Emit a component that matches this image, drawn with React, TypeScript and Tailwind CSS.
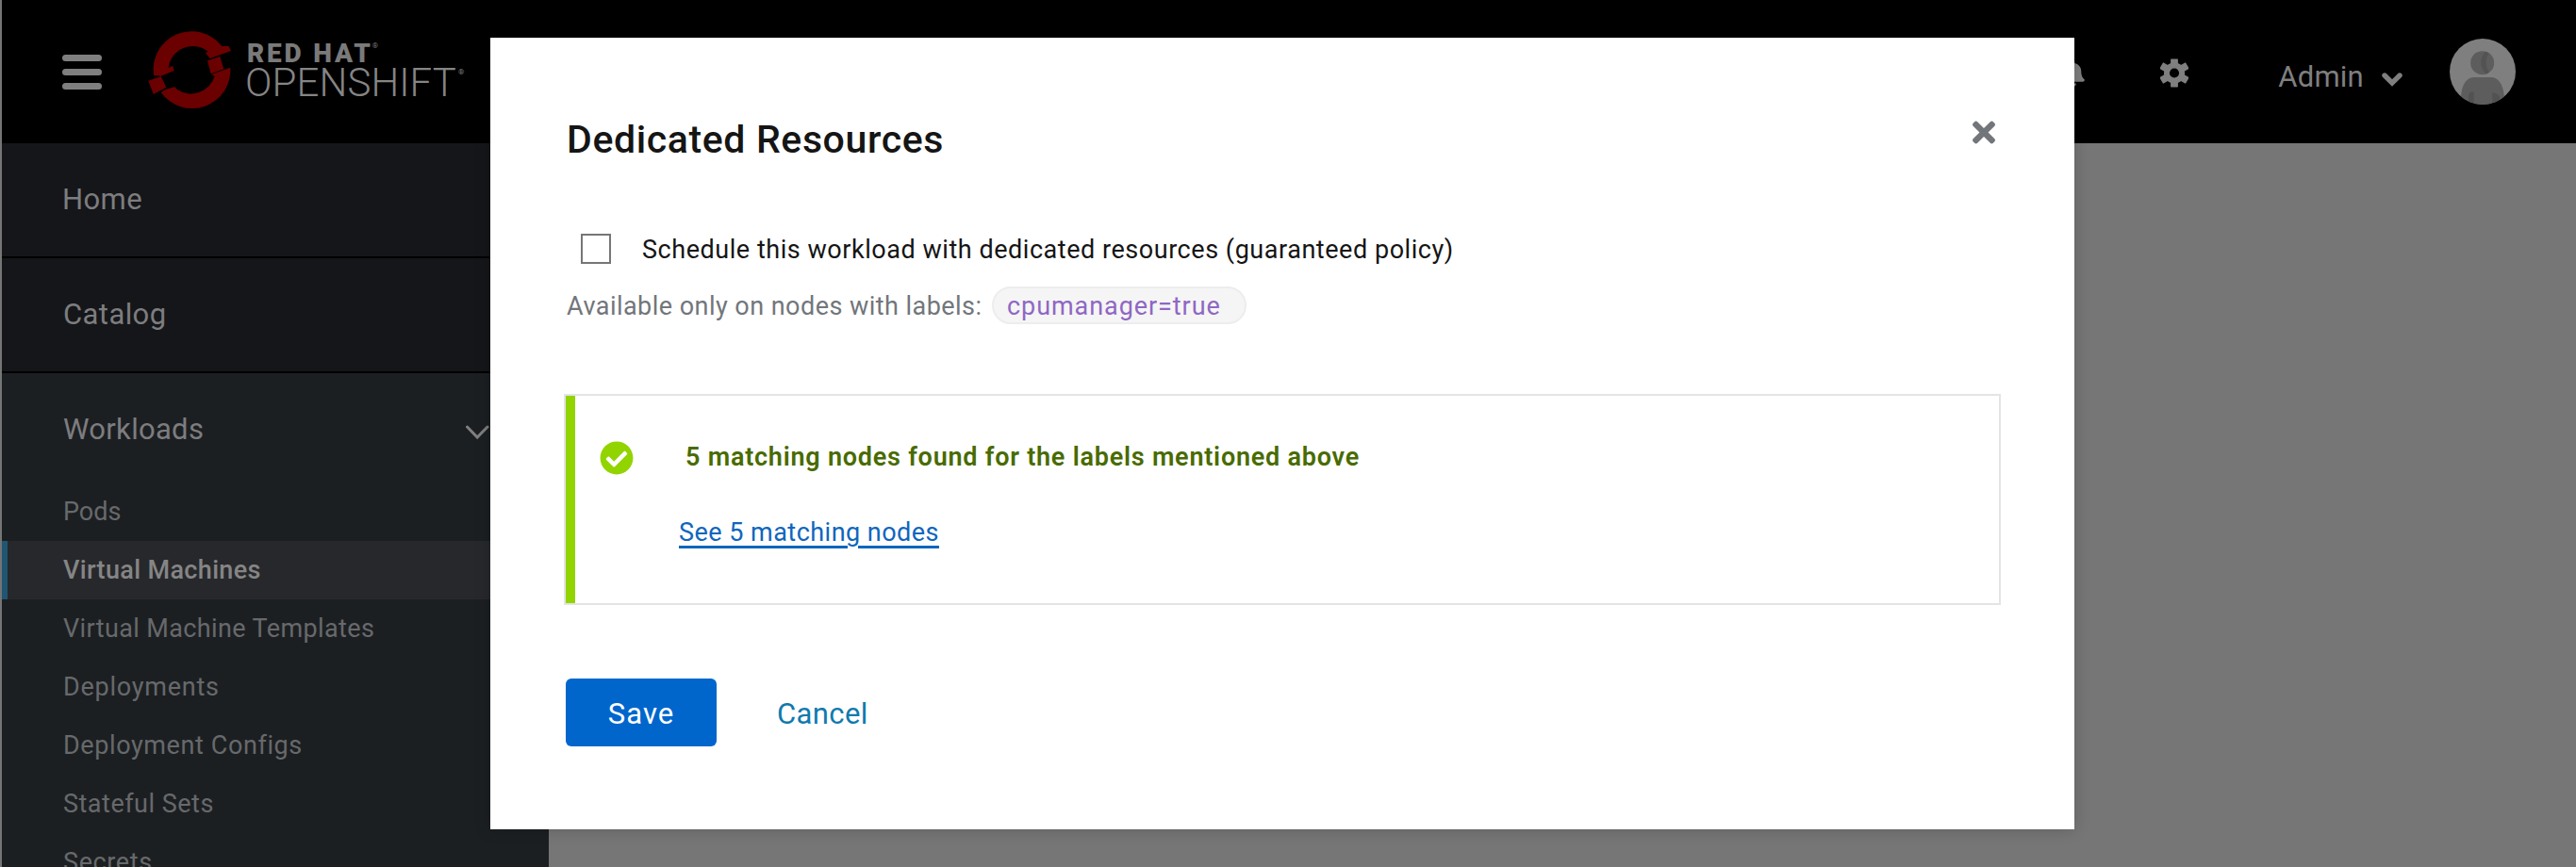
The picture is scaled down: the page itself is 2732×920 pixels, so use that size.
import React from "react";
import { FaBell, FaCheckCircle, FaTimes } from "react-icons/fa";

const subItems = [
  { label: "Pods", spacing: "" },
  { label: "Virtual Machines", spacing: "tracking-[0.35px]", active: true },
  { label: "Virtual Machine Templates", spacing: "tracking-[0.38px]" },
  { label: "Deployments", spacing: "tracking-[0.75px]" },
  { label: "Deployment Configs", spacing: "tracking-[0.6px]" },
  { label: "Stateful Sets", spacing: "tracking-[0.5px]" },
  { label: "Secrets", spacing: "tracking-[0.6px]" },
];

function LogoMark() {
  return (
    <svg className="ml-[42px] mt-6 h-[100px] w-[120px] shrink-0" viewBox="0 0 360 300" fill="#6b0000">
      <path d="M39 168 A122 122 0 0 1 256 75 L278 75 L285 90 L218 114 L204 96 L212 92 A78 78 0 0 0 86 144 L100 138 L104 153 L62 170 Z" />
      <path d="M210 121 L250 108 L262 148 L221 163 Z" />
      <path d="M22 185 L62 171 L79 206 L38 228 Z" />
      <path d="M62 222 L78 212 L106 205 L113 212 A78 78 0 0 0 233 170 L222 165 L283 143 A122 122 0 0 1 62 222 Z" />
    </svg>
  );
}

function Gear() {
  return (
    <svg className="ml-20 mt-[62px] h-[31px] w-[30px] shrink-0" viewBox="-46 -47 92 94" fill="#7f7f7f">
      <defs>
        <mask id="hub">
          <rect x="-50" y="-50" width="100" height="100" fill="white" />
          <circle r="15.5" fill="black" />
        </mask>
      </defs>
      <g mask="url(#hub)">
        <circle r="34" />
        <rect x="-12" y="-46" width="24" height="92" rx="2" />
        <rect x="-12" y="-49" width="24" height="98" rx="2" transform="rotate(60)" />
        <rect x="-12" y="-49" width="24" height="98" rx="2" transform="rotate(120)" />
      </g>
    </svg>
  );
}

function Avatar() {
  return (
    <svg className="ml-[49px] mt-[41px] h-[70px] w-[70px] shrink-0" viewBox="0 0 210 210">
      <defs>
        <clipPath id="face"><circle cx="105" cy="105" r="105" /></clipPath>
        <clipPath id="head"><circle cx="104" cy="77" r="37.5" /></clipPath>
      </defs>
      <g clipPath="url(#face)">
        <rect width="210" height="210" fill="#7f7f7f" />
        <circle cx="104" cy="77" r="37.5" fill="#5d5d5d" />
        <path clipPath="url(#head)" d="M116 38 Q82 76 118 116 L128 112 Q104 76 128 40 Z" fill="#535353" />
        <path d="M36 210 V186 Q40 123 80 123 H130 Q168 123 174 186 V210 Z" fill="#5d5d5d" />
        <path d="M60 210 V182 Q60 170 77 168 V210 Z M136 210 V172 Q160 174 160 192 V210 Z" fill="#525252" />
      </g>
    </svg>
  );
}

function Header() {
  return (
    <header className="flex h-[152px] shrink-0 items-start bg-black text-[#7f7f7f]">
      <div className="ml-16 mt-[58px] flex w-[42px] shrink-0 flex-col gap-2">
        <span className="h-[7px] rounded-sm bg-[#7f7f7f]" />
        <span className="h-[7px] rounded-sm bg-[#7f7f7f]" />
        <span className="h-[7px] rounded-sm bg-[#7f7f7f]" />
      </div>
      <LogoMark />
      <div className="-ml-2.5 mt-[43px] flex flex-col whitespace-nowrap text-[#7a7a7a]">
        <div className="flex items-start pl-0.5 text-[28px] font-black leading-7 tracking-[2.8px]">
          RED HAT<span className="-ml-px mt-0.5 text-[8px] font-normal leading-none tracking-normal">®</span>
        </div>
        <div className="flex items-start text-[42px] font-light leading-[34px] tracking-[0.1px] text-[#858585]">
          OPENSHIFT<span className="ml-0.5 mt-0.5 text-[8px] font-normal leading-none">®</span>
        </div>
      </div>
      <div className="flex-1" />
      <FaBell className="mt-16 h-7 w-[25px] shrink-0" />
      <Gear />
      <div className="ml-[95px] mt-[62px] text-[31px] leading-[40px] tracking-[0.25px]">Admin</div>
      <svg className="ml-[18px] mt-[76px] h-[17px] w-6 shrink-0" viewBox="0 0 24 17" fill="none" stroke="#7f7f7f" strokeWidth="5.4" strokeLinecap="round">
        <path d="M4 4 L12 12 L20 4" />
      </svg>
      <Avatar />
      <div className="w-16 shrink-0" />
    </header>
  );
}

function Sidebar() {
  return (
    <nav className="w-[580px] shrink-0 whitespace-nowrap bg-[#1c1f22] text-[31px] text-[#7d7d7f]">
      <div className="flex h-[122px] items-center border-b-2 border-black bg-[#151619] pl-16 tracking-[0.4px]">Home</div>
      <div className="flex h-[122px] items-center border-b-2 border-black bg-[#151619] pl-[65px] tracking-[0.4px]">Catalog</div>
      <div className="flex h-[116px] items-center justify-between pl-[65px] pr-[63px] pt-1 tracking-[0.3px]">
        Workloads
        <svg className="mt-1.5 h-4 w-[26px]" viewBox="0 0 26 16" fill="none" stroke="#7f7f7f" strokeWidth="3" strokeLinecap="round">
          <path d="M2.5 2 L13.2 13 L24 2" />
        </svg>
      </div>
      {subItems.map((item) => (
        <div
          key={item.label}
          className={
            item.active
              ? "flex h-[62px] items-center border-l-[6px] border-[#1f5672] bg-[#27282c] pl-[59px] text-[27px] font-medium text-[#858585]"
              : "flex h-[62px] items-center pl-[65px] text-[27px] text-[#67696b]"
          }
        >
          <span className={item.spacing}>{item.label}</span>
        </div>
      ))}
    </nav>
  );
}

function Modal() {
  return (
    <section className="absolute left-[520px] top-10 h-[840px] w-[1680px] whitespace-nowrap bg-white px-20 pt-20 text-[27px] text-[#151515] shadow-[0_0_16px_rgba(0,0,0,0.2)]">
      <div className="flex h-14 items-center justify-between pr-1">
        <h1 className="pl-px pt-0.5 text-[41px] font-medium tracking-[0.62px]">Dedicated Resources</h1>
        <FaTimes className="-mt-4 h-[35px] w-6 text-[#72767b]" />
      </div>
      <label className="mt-[68px] flex h-10 items-center pl-4">
        <span className="h-8 w-8 border-2 border-[#767676]" />
        <span className="ml-[33px] pt-0.5 tracking-[0.54px]">Schedule this workload with dedicated resources (guaranteed policy)</span>
      </label>
      <div className="mt-5 flex h-10 items-center">
        <span className="w-[452px] pl-px pt-0.5 tracking-[0.46px] text-[#72767b]">Available only on nodes with labels:</span>
        <span className="flex h-10 w-[270px] items-center rounded-full border-2 border-[#ededed] bg-[#f5f5f5] pl-3.5 tracking-[0.93px] text-[#8f67c4]">
          <span className="pt-0.5">cpumanager=true</span>
        </span>
      </div>
      <div className="-ml-0.5 mt-[74px] flex h-[224px] w-[1524px] border-2 border-[#e4e4e4]">
        <div className="w-2.5 bg-[#92d400]" />
        <div className="flex flex-col pl-[26px] pt-[45px]">
          <div className="flex h-10 items-center">
            <FaCheckCircle className="mt-0.5 h-9 w-9 text-[#92d400]" />
            <strong className="ml-[55px] pt-px font-semibold tracking-[0.77px] text-[#486b00]">5 matching nodes found for the labels mentioned above</strong>
          </div>
          <div className="ml-[84px] mt-10 flex h-10 items-center">
            <a className="tracking-[0.47px] text-[#0f66bd] underline decoration-[3px] underline-offset-[5px]">See 5 matching nodes</a>
          </div>
        </div>
      </div>
      <div className="mt-[78px] flex text-[31px]">
        <button className="h-[72px] w-40 rounded-md bg-[#0066cc] pt-1 tracking-[1px] text-white">Save</button>
        <button className="ml-16 h-[72px] pt-1 tracking-[0.4px] text-[#0f7aae]">Cancel</button>
      </div>
    </section>
  );
}

export default function App() {
  return (
    <div className="relative flex h-[920px] w-[2732px] flex-col overflow-hidden border-l-2 border-[#757575] bg-[#767676] font-['Roboto','Liberation_Sans',sans-serif]">
      <Header />
      <div className="flex min-h-0 flex-1">
        <Sidebar />
        <main className="flex-1 bg-[#767676]" />
      </div>
      <div className="absolute inset-y-0 -left-0.5 right-0">
        <Modal />
      </div>
    </div>
  );
}
